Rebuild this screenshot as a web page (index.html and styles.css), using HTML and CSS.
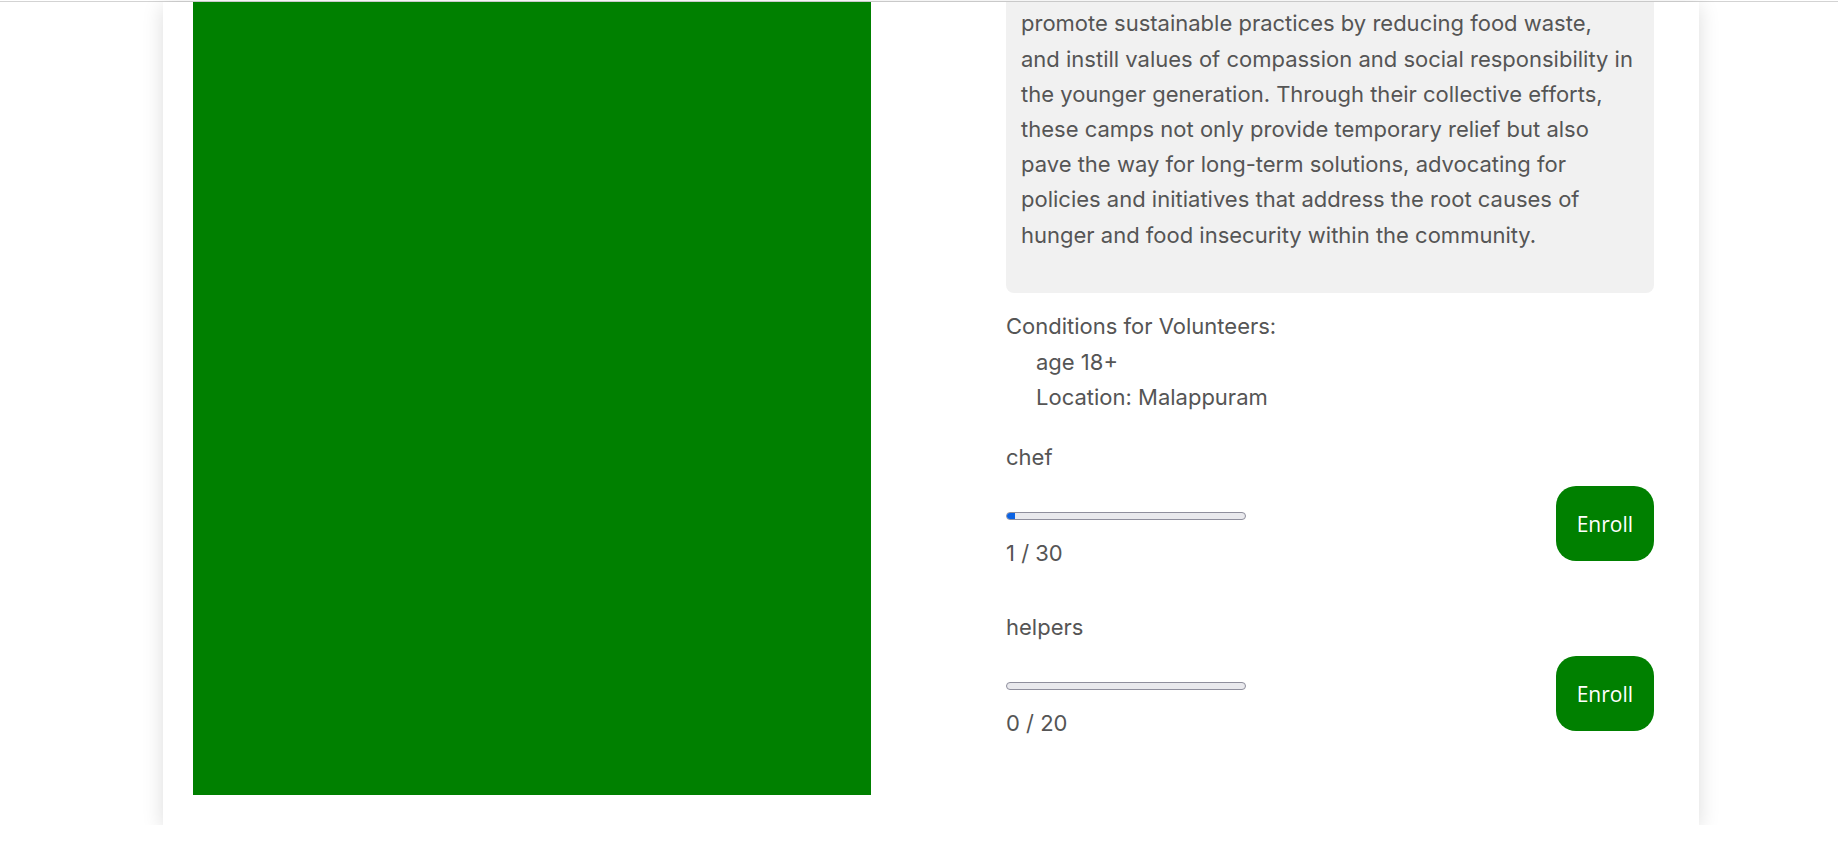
FILE: index.html
```html
<!DOCTYPE html>
<html lang="en">
<head>
<meta charset="utf-8">
<title>Food Camp</title>
<link rel="stylesheet" href="styles.css">
</head>
<body>
<div class="topbar"></div>
<main class="card">
  <div class="photo"></div>
  <section class="details">
    <div class="desc">
      <p>promote sustainable practices by reducing food waste, and instill values of compassion and social responsibility in the younger generation. Through their collective efforts, these camps not only provide temporary relief but also pave the way for long-term solutions, advocating for policies and initiatives that address the root causes of hunger and food insecurity within the community.</p>
    </div>
    <div class="conditions">
      <p>Conditions for Volunteers:</p>
      <ul>
        <li>age 18+</li>
        <li>Location: Malappuram</li>
      </ul>
    </div>
    <div class="role">
      <p class="role-name">chef</p>
      <div class="role-row">
        <div class="role-stats">
          <div class="bar"><div class="fill" style="width: 3.33%"></div></div>
          <p class="count">1 / 30</p>
        </div>
        <button class="enroll">Enroll</button>
      </div>
    </div>
    <div class="role">
      <p class="role-name">helpers</p>
      <div class="role-row">
        <div class="role-stats">
          <div class="bar"><div class="fill" style="width: 0%"></div></div>
          <p class="count">0 / 20</p>
        </div>
        <button class="enroll">Enroll</button>
      </div>
    </div>
  </section>
</main>
</body>
</html>
```
FILE: styles.css
```css
body {
  margin: 0;
  background: #fff;
  color: #555;
  font-family: Inter, "Noto Sans", sans-serif;
}

.topbar {
  height: 1px;
  border-bottom: 1px solid #d3d3d3;
}

.card {
  width: 1536px;
  margin-left: 163px;
  box-sizing: border-box;
  padding: 0 45px 30px 30px;
  display: flex;
  gap: 135px;
  background: #fff;
  box-shadow: 0 4px 20px rgba(0, 0, 0, 0.14);
}

.photo {
  flex: none;
  width: 678px;
  height: 793px;
  background: #008000;
}

.details {
  flex: none;
  width: 648px;
  font-size: 22px;
  line-height: 35.2px;
}

.details p {
  margin: 0;
}

.desc {
  background: #f1f1f1;
  border-radius: 0 0 8px 8px;
  padding: 4.4px 19px 40px 15px;
}

.conditions {
  margin-top: 16.6px;
}

.conditions ul {
  margin: 0;
  padding-left: 30px;
  list-style: none;
}

.role {
  margin-top: 25.4px;
}

.role + .role {
  margin-top: 38.8px;
}

.role-row {
  display: flex;
  align-items: center;
  justify-content: space-between;
}

.bar {
  box-sizing: border-box;
  width: 240px;
  height: 8px;
  margin-top: 36.4px;
  border: 1px solid #8f8f9d;
  border-radius: 4px;
  background: #e9e9ed;
  overflow: hidden;
}

.fill {
  height: 100%;
  background: #0b62e3;
}

.details .count {
  margin-top: 16.4px;
}

.enroll {
  height: 75px;
  padding: 0 21px;
  border: none;
  border-radius: 20px;
  background: #008000;
  color: #fff;
  font-family: "Open Sans", sans-serif;
  font-size: 21px;
}
```
